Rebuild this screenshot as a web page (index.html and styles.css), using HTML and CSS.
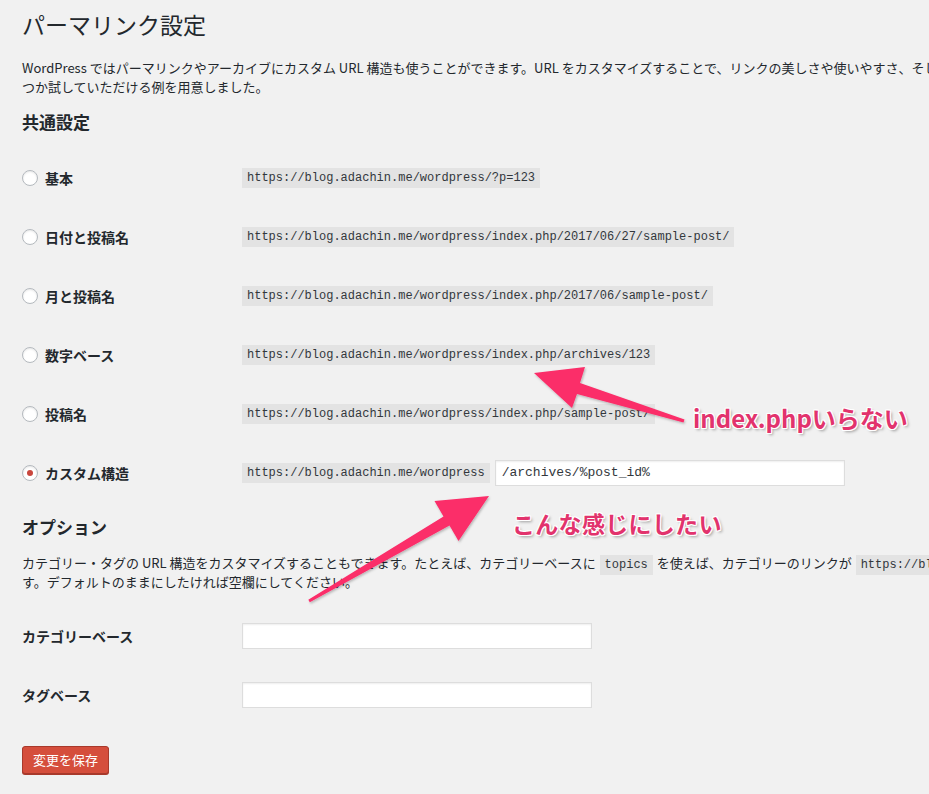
FILE: index.html
```html
<!DOCTYPE html>
<html lang="ja">
<head>
<meta charset="utf-8">
<title>パーマリンク設定</title>
<link rel="stylesheet" href="styles.css">
</head>
<body>
<div class="wrap">
  <h1 class="title">パーマリンク設定</h1>
  <p class="desc">WordPress ではパーマリンクやアーカイブにカスタム URL 構造も使うことができます。URL をカスタマイズすることで、リンクの美しさや使いやすさ、そして前方互換性を高めることができます。利用可能なタグはいくつかあり、ここではいく<br>つか試していただける例を用意しました。</p>

  <h2 class="section">共通設定</h2>
  <div class="rows">
    <div class="row">
      <label class="choice"><span class="radio"></span><span>基本</span></label>
      <code class="url">https://blog.adachin.me/wordpress/?p=123</code>
    </div>
    <div class="row">
      <label class="choice"><span class="radio"></span><span>日付と投稿名</span></label>
      <code class="url">https://blog.adachin.me/wordpress/index.php/2017/06/27/sample-post/</code>
    </div>
    <div class="row">
      <label class="choice"><span class="radio"></span><span>月と投稿名</span></label>
      <code class="url">https://blog.adachin.me/wordpress/index.php/2017/06/sample-post/</code>
    </div>
    <div class="row">
      <label class="choice"><span class="radio"></span><span>数字ベース</span></label>
      <code class="url">https://blog.adachin.me/wordpress/index.php/archives/123</code>
    </div>
    <div class="row">
      <label class="choice"><span class="radio"></span><span>投稿名</span></label>
      <code class="url">https://blog.adachin.me/wordpress/index.php/sample-post/</code>
    </div>
    <div class="row">
      <label class="choice"><span class="radio checked"></span><span>カスタム構造</span></label>
      <div class="custom">
        <code class="url">https://blog.adachin.me/wordpress</code>
        <div class="field field-custom">/archives/%post_id%</div>
      </div>
    </div>
  </div>

  <h2 class="section section-options">オプション</h2>
  <p class="desc desc-options">カテゴリー・タグの URL 構造をカスタマイズすることもできます。たとえば、カテゴリーベースに <code class="inline">topics</code> を使えば、カテゴリーのリンクが <code class="inline">https://blog.adachin.me/wordpress/topics/uncategorized/</code> のようになりま<br>す。デフォルトのままにしたければ空欄にしてください。</p>

  <div class="rows rows-options">
    <div class="row">
      <span class="option-label">カテゴリーベース</span>
      <div class="field field-option"></div>
    </div>
    <div class="row">
      <span class="option-label">タグベース</span>
      <div class="field field-option"></div>
    </div>
  </div>

  <div class="actions">
    <button class="button" type="button">変更を保存</button>
  </div>
</div>

<svg class="overlay" width="929" height="794" viewBox="0 0 929 794">
  <defs>
    <filter id="arrowShadow" x="-10%" y="-10%" width="120%" height="120%">
      <feDropShadow dx="1" dy="1.5" stdDeviation="1.2" flood-color="#000" flood-opacity="0.25"/>
    </filter>
  </defs>
  <polygon class="arrow" filter="url(#arrowShadow)" points="534,373 585,367 580,383 684.5,419.6 683.5,422.4 577,394 572,408"/>
  <polygon class="arrow" filter="url(#arrowShadow)" points="489,496 434.5,501 443.5,516.5 308.3,599.7 309.8,602.3 449.5,525.5 458.5,541"/>
</svg>
<div class="note note-1">index.phpいらない</div>
<div class="note note-2">こんな感じにしたい</div>
</body>
</html>
```

FILE: styles.css
```css
html, body {
  margin: 0;
  padding: 0;
}

body {
  background: #f1f1f1;
  color: #23282d;
  font-family: "Noto Sans CJK JP", "Noto Sans", sans-serif;
  font-size: 13px;
  width: 929px;
  height: 794px;
  overflow: hidden;
  position: relative;
}

.wrap {
  padding: 10px 0 0 22px;
  width: 1600px;
}

.title {
  font-size: 23px;
  font-weight: 400;
  line-height: 29px;
  margin: 0;
}

.desc {
  margin: 19px 0 0;
  line-height: 19px;
  white-space: nowrap;
}

.section {
  font-size: 17px;
  font-weight: 700;
  line-height: 22px;
  margin: 15px 0 0;
}

.rows {
  margin-top: 15px;
}

.row {
  display: flex;
  align-items: center;
  height: 59px;
}

.choice {
  width: 220px;
  flex: none;
  display: flex;
  align-items: center;
  gap: 7px;
  font-size: 14px;
  font-weight: 700;
  line-height: 20px;
}

.radio {
  width: 16px;
  height: 16px;
  box-sizing: border-box;
  border: 1px solid #b4b9be;
  border-radius: 50%;
  background: #fff;
  box-shadow: inset 0 1px 2px rgba(0, 0, 0, 0.1);
  display: flex;
  align-items: center;
  justify-content: center;
  flex: none;
}

.radio.checked::before {
  content: "";
  width: 6px;
  height: 6px;
  border-radius: 50%;
  background: #c9463d;
}

.url,
.inline {
  font-family: "Liberation Mono", monospace;
  font-size: 12px;
  line-height: 14px;
  padding: 3px 5px;
  background: #e3e3e3;
  color: #32373c;
}

.inline {
  margin: 0 1px;
}

.custom {
  display: flex;
  align-items: center;
  gap: 5px;
}

.field {
  box-sizing: border-box;
  height: 26px;
  background: #fff;
  border: 1px solid #dddddd;
  box-shadow: inset 0 1px 2px rgba(0, 0, 0, 0.07);
}

.field-custom {
  width: 350px;
  padding: 0 6px;
  font-family: "Liberation Mono", monospace;
  font-size: 13px;
  line-height: 24px;
  color: #32373c;
}

.section-options {
  margin-top: 14px;
}

.desc-options {
  margin-top: 15px;
}

.rows-options {
  margin-top: 15px;
}

.option-label {
  width: 220px;
  flex: none;
  font-size: 14px;
  font-weight: 700;
  line-height: 20px;
}

.field-option {
  width: 350px;
}

.actions {
  margin-top: 22px;
}

.button {
  height: 28px;
  padding: 0 10px;
  font-family: "Noto Sans CJK JP", sans-serif;
  font-size: 13px;
  line-height: 26px;
  color: #fff;
  background: #d54e3c;
  border: 1px solid #a8392b;
  border-radius: 3px;
  box-shadow: 0 1px 0 #a8392b;
}

.overlay {
  position: absolute;
  left: 0;
  top: 0;
  pointer-events: none;
}

.arrow {
  fill: #fb2d69;
}

.note {
  position: absolute;
  font-family: "Noto Sans CJK JP", sans-serif;
  font-weight: 700;
  font-size: 24px;
  line-height: 30px;
  color: #e2336d;
  white-space: nowrap;
  text-shadow:
    1px 0 #fff, -1px 0 #fff, 0 1px #fff, 0 -1px #fff,
    1px 1px #fff, -1px -1px #fff, 1px -1px #fff, -1px 1px #fff,
    2px 2px 3px rgba(0, 0, 0, 0.35);
}

.note-1 {
  left: 693px;
  top: 403px;
}

.note-2 {
  left: 512px;
  top: 508px;
  font-size: 23px;
  letter-spacing: 0.3px;
}
```
